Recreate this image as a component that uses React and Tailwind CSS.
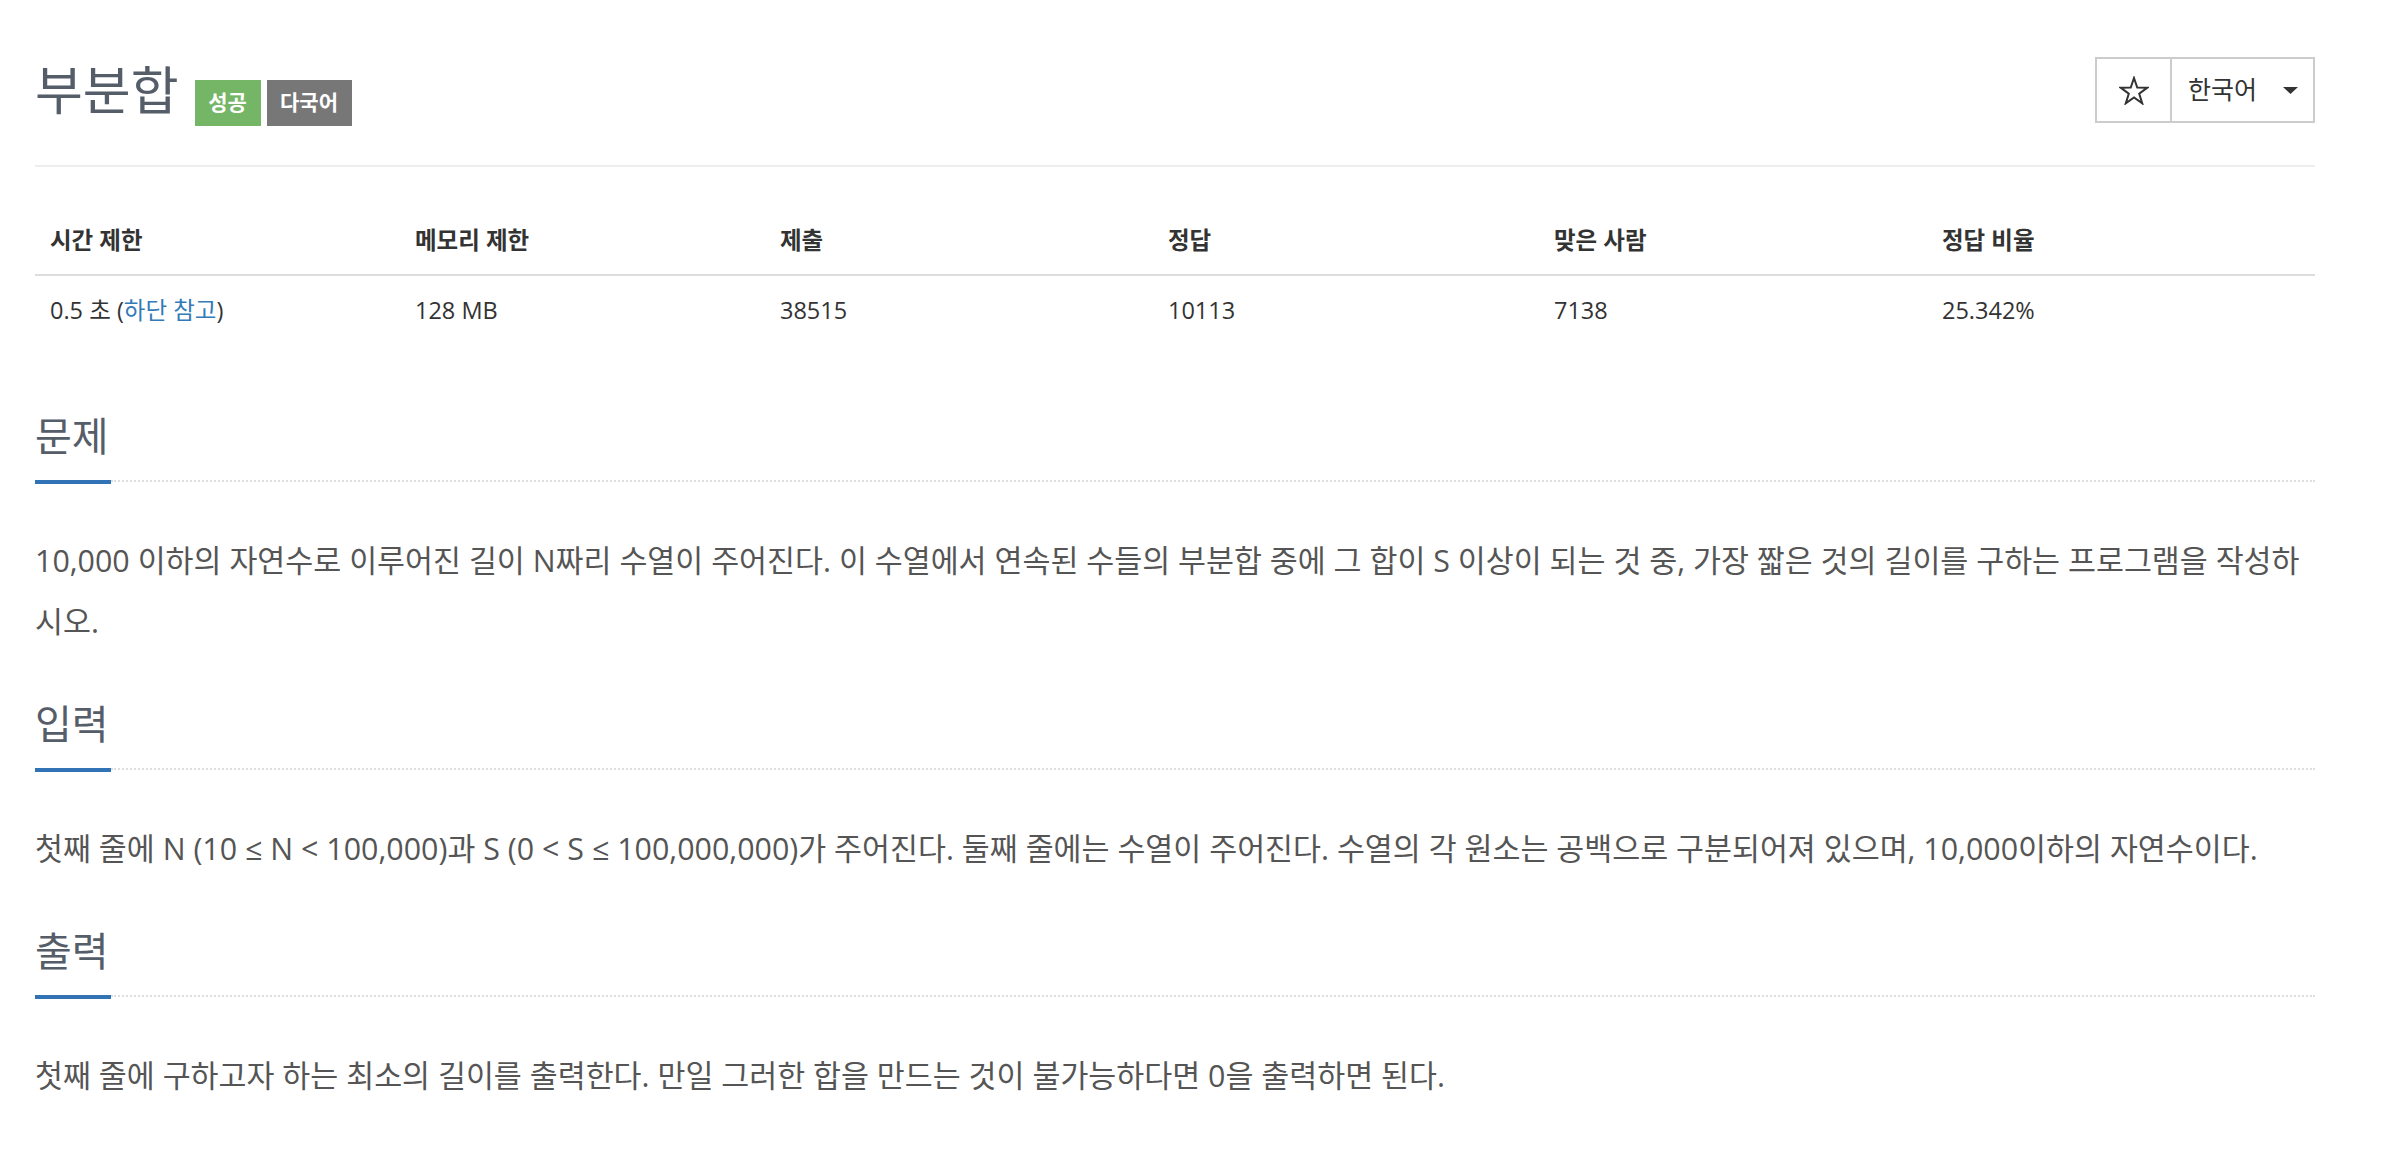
import React from "react";

const stats = [
  { head: "시간 제한", value: "time" },
  { head: "메모리 제한", value: "128 MB" },
  { head: "제출", value: "38515" },
  { head: "정답", value: "10113" },
  { head: "맞은 사람", value: "7138" },
  { head: "정답 비율", value: "25.342%" },
];

const sections = [
  {
    title: "문제",
    text: "10,000 이하의 자연수로 이루어진 길이 N짜리 수열이 주어진다. 이 수열에서 연속된 수들의 부분합 중에 그 합이 S 이상이 되는 것 중, 가장 짧은 것의 길이를 구하는 프로그램을 작성하시오.",
  },
  {
    title: "입력",
    text: "첫째 줄에 N (10 ≤ N < 100,000)과 S (0 < S ≤ 100,000,000)가 주어진다. 둘째 줄에는 수열이 주어진다. 수열의 각 원소는 공백으로 구분되어져 있으며, 10,000이하의 자연수이다.",
  },
  {
    title: "출력",
    text: "첫째 줄에 구하고자 하는 최소의 길이를 출력한다. 만일 그러한 합을 만드는 것이 불가능하다면 0을 출력하면 된다.",
  },
];

const StarIcon = () => (
  <svg width="30" height="29" viewBox="-1 -1 30 29" fill="none">
    <polygon
      points="14,1 17.23,10.55 27.31,10.67 19.23,16.7 22.23,26.33 14,20.5 5.77,26.33 8.77,16.7 0.69,10.67 10.77,10.55"
      stroke="#333"
      strokeWidth="2"
      strokeLinejoin="miter"
    />
  </svg>
);

const Caret = () => (
  <svg width="15" height="7" viewBox="0 0 15 7">
    <polygon points="0,0 15,0 7.5,7" fill="#333" />
  </svg>
);

const Section = ({ title, text, first }) => (
  <div className={first ? "mt-[63px]" : "mt-[45px]"}>
    <h2 className="text-[40px] leading-[54px] font-normal text-[#555d69]">{title}</h2>
    <div className="mt-[17px] flex items-start">
      <div className="h-[4px] w-[76px] bg-[#3273b5]"></div>
      <div className="flex-1 border-t-2 border-dotted border-[#dedede]"></div>
    </div>
    <p className="mt-[46px] text-[30.4px] leading-[61px] text-[#555]">{text}</p>
  </div>
);

export default function App() {
  return (
    <div className="min-h-screen bg-white font-['Open_Sans','Noto_Sans_CJK_KR',sans-serif]">
      <div className="ml-[35px] w-[2280px] pt-[57px] pb-[40px]">
        {/* Title row */}
        <div className="flex items-start justify-between">
          <div className="flex items-start">
            <h1 className="text-[52px] leading-[66px] font-normal text-[#555d69]">부분합</h1>
            <span className="ml-[16px] mt-[23px] flex h-[46px] w-[66px] items-center justify-center bg-[#74b566] text-[21px] font-bold text-white">
              성공
            </span>
            <span className="ml-[6px] mt-[23px] flex h-[46px] w-[85px] items-center justify-center bg-[#777] text-[21px] font-bold text-white">
              다국어
            </span>
          </div>
          <div className="flex h-[66px] border-2 border-[#ccc]">
            <button className="flex w-[75px] items-center justify-center border-r-2 border-[#ccc]">
              <StarIcon />
            </button>
            <button className="flex w-[141px] items-center justify-between pl-[16px] pr-[15px] text-[25px] text-[#333]">
              <span>한국어</span>
              <Caret />
            </button>
          </div>
        </div>

        <div className="mt-[39px] h-[2px] bg-[#eee]"></div>

        {/* Info table */}
        <div className="mt-[41px] text-[23.5px] text-[#333]">
          <div className="grid h-[68px] grid-cols-[365px_365px_388px_386px_388px_388px] items-center border-b-2 border-[#ddd] font-bold">
            {stats.map((s) => (
              <div key={s.head} className="pl-[15px]">{s.head}</div>
            ))}
          </div>
          <div className="grid h-[70px] grid-cols-[365px_365px_388px_386px_388px_388px] items-center">
            {stats.map((s) => (
              <div key={s.head} className="pl-[15px]">
                {s.value === "time" ? (
                  <span>
                    0.5 초 (<a className="text-[#337ab7]">하단 참고</a>)
                  </span>
                ) : (
                  s.value
                )}
              </div>
            ))}
          </div>
        </div>

        {sections.map((s, i) => (
          <Section key={s.title} title={s.title} text={s.text} first={i === 0} />
        ))}
      </div>
    </div>
  );
}
